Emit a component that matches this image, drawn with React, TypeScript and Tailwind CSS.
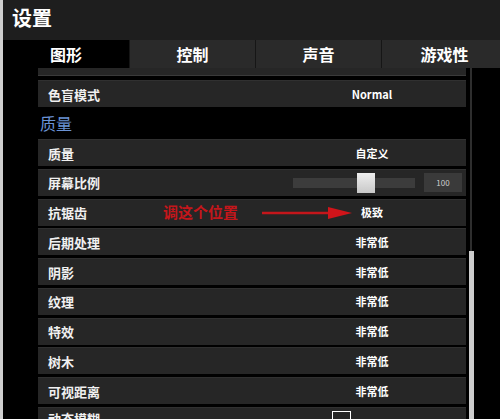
import React from 'react';

const font = { fontFamily: '"Noto Sans CJK SC", "Noto Sans", sans-serif' };

const tabs = ['图形', '控制', '声音', '游戏性'];

const lowRows = ['后期处理', '阴影', '纹理', '特效', '树木', '可视距离'];

const Row: React.FC<{ label: string; children?: React.ReactNode }> = ({ label, children }) => (
  <div className="flex items-center h-[27px] bg-[#262626] border-t border-[#303030] shrink-0">
    <span className="w-[260px] pl-[10px] text-[13px] font-bold text-[#f0f0f0] leading-none">{label}</span>
    <div className="flex-1 flex items-center self-stretch">{children}</div>
  </div>
);

const Value: React.FC<{ text: string }> = ({ text }) => (
  <span className="w-[148px] text-center text-[11px] font-bold text-white leading-none">{text}</span>
);

export default function App() {
  return (
    <div className="w-[500px] h-[419px] overflow-hidden bg-black flex" style={font}>
      <div className="w-[3px] bg-[#cfcfcf] shrink-0" />
      <div className="flex-1 flex flex-col">
        <div className="h-[40px] bg-[#1e1e1e] flex items-center pl-[9px] pb-[4px] shrink-0">
          <span className="text-[20px] font-bold text-white leading-none">设置</span>
        </div>
        <div className="h-[28px] flex shrink-0 bg-[#1a1a1a]">
          {tabs.map((t, i) => (
            <div
              key={t}
              className={`flex items-center justify-center text-[16px] font-bold text-white ${
                i === 0 ? 'w-[126px] bg-black' : 'w-[126px] bg-[#2a2a2a] border-l border-[#161616]'
              } ${i === 3 ? 'flex-1' : ''}`}
            >
              {t}
            </div>
          ))}
        </div>
        <div className="flex-1 flex">
          <div className="w-[35px] shrink-0" />
          <div className="w-[428px] flex flex-col shrink-0">
            <div className="h-[8px] bg-[#262626] border-b border-[#3a3a3a] shrink-0" />
            <div className="h-[4px] shrink-0" />
            <Row label="色盲模式">
              <Value text="Normal" />
            </Row>
            <div className="h-[32px] flex items-center pl-[2px] text-[16px] text-[#6b93d6] shrink-0">质量</div>
            <div className="flex flex-col gap-[2.75px]">
              <Row label="质量">
                <Value text="自定义" />
              </Row>
              <Row label="屏幕比例">
                <div className="flex items-center ml-[-5px]">
                  <div className="relative w-[122px] h-[10px] bg-[#3c3c3c]">
                    <div className="absolute left-[64px] top-[-5px] w-[18px] h-[20px] bg-gradient-to-b from-[#eeeeee] to-[#c8c8c8]" />
                  </div>
                  <div className="ml-[9px] w-[38px] h-[19px] bg-[#3a3a3a] flex items-center justify-center text-[8px] text-[#cfcfcf]">
                    100
                  </div>
                </div>
              </Row>
              <div className="relative">
                <Row label="抗锯齿">
                  <Value text="极致" />
                </Row>
                <span className="absolute left-[125px] top-[5px] text-[15px] font-bold text-[#c4161b] leading-none">
                  调这个位置
                </span>
                <svg className="absolute left-[222px] top-[7px]" width="94" height="14" viewBox="0 0 94 14">
                  <line x1="2" y1="7" x2="74" y2="7" stroke="#c4161b" strokeWidth="2.5" />
                  <polygon points="68,1 92,7 68,13" fill="#d0141a" />
                </svg>
              </div>
              {lowRows.map((r) => (
                <Row key={r} label={r}>
                  <Value text="非常低" />
                </Row>
              ))}
              <div className="flex h-[27px] bg-[#262626] border-t border-[#303030] shrink-0">
                <span className="w-[260px] pl-[10px] pt-[4px] text-[13px] font-bold text-[#f0f0f0] leading-none">
                  动态模糊
                </span>
                <div className="w-[19px] h-[19px] border-[1.5px] border-white ml-[34px] mt-[3px]" />
              </div>
            </div>
          </div>
          <div className="w-[10px] flex justify-center shrink-0">
            <div className="flex flex-col items-center">
              <div className="w-[2px] h-[183px] bg-[#2e2e2e]" />
              <div className="w-[5px] flex-1 bg-[#cdcdcd]" />
            </div>
          </div>
        </div>
      </div>
    </div>
  );
}
